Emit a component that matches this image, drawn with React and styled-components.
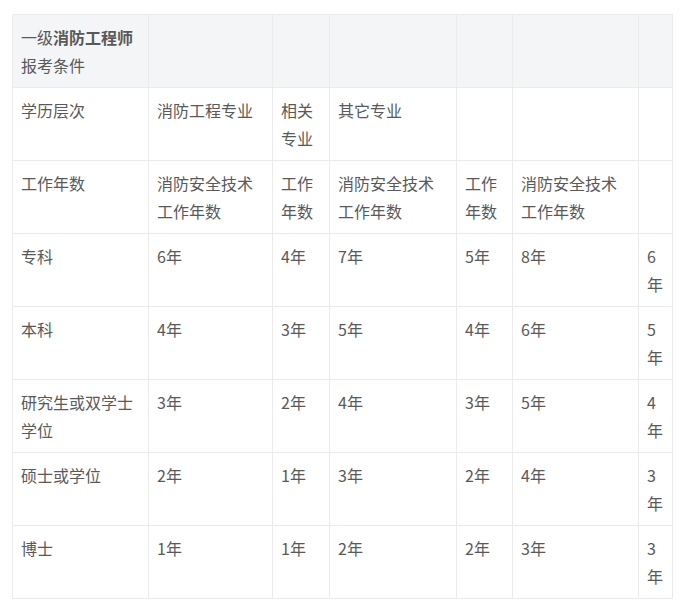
import styled, { createGlobalStyle } from 'styled-components'

const GlobalStyle = createGlobalStyle`
  body {
    margin: 0;
    background: #fff;
    font-family: "Noto Sans CJK SC", "Noto Sans", sans-serif;
  }
`

const Page = styled.div`
  padding: 14px 12px;
`

const Table = styled.table`
  border-collapse: collapse;
  table-layout: fixed;
  width: 660px;
  font-size: 16px;
  line-height: 28px;
  color: #595959;
`

const Cell = styled.td`
  border: 1px solid #ebebeb;
  padding: 8px;
  vertical-align: top;
  word-break: break-all;
  background: ${p => (p.$head ? '#f4f5f6' : '#fff')};
  b {
    font-weight: 700;
  }
`

const widths = [136, 124, 57, 127, 56, 126, 34]

const rows = [
  ['学历层次', '消防工程专业', '相关专业', '其它专业', '', '', ''],
  ['工作年数', '消防安全技术工作年数', '工作年数', '消防安全技术工作年数', '工作年数', '消防安全技术工作年数', ''],
  ['专科', '6年', '4年', '7年', '5年', '8年', '6年'],
  ['本科', '4年', '3年', '5年', '4年', '6年', '5年'],
  ['研究生或双学士学位', '3年', '2年', '4年', '3年', '5年', '4年'],
  ['硕士或学位', '2年', '1年', '3年', '2年', '4年', '3年'],
  ['博士', '1年', '1年', '2年', '2年', '3年', '3年'],
]

export default function App() {
  return (
    <Page>
      <GlobalStyle />
      <Table>
        <colgroup>
          {widths.map((w, i) => (
            <col key={i} style={{ width: w }} />
          ))}
        </colgroup>
        <thead>
          <tr>
            <Cell as="th" $head style={{ textAlign: 'left', fontWeight: 400 }}>
              一级<b>消防工程师</b>
              <br />
              报考条件
            </Cell>
            {widths.slice(1).map((_, i) => (
              <Cell as="th" $head key={i} />
            ))}
          </tr>
        </thead>
        <tbody>
          {rows.map((r, i) => (
            <tr key={i}>
              {r.map((c, j) => (
                <Cell key={j}>{c}</Cell>
              ))}
            </tr>
          ))}
        </tbody>
      </Table>
    </Page>
  )
}
